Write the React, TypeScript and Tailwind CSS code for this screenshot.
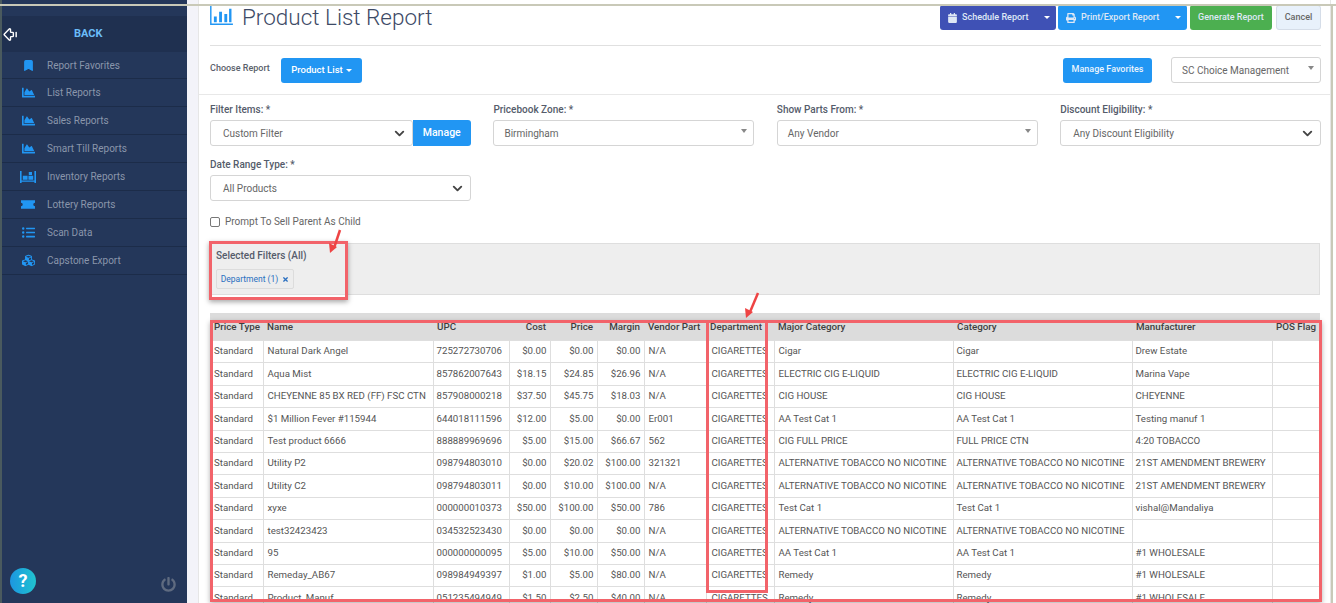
import { ArrowBigLeftDash, Bookmark, ChevronDown } from 'lucide-react';
import { FaCalendar, FaChartArea, FaCubes, FaListUl, FaPowerOff, FaPrint, FaTimes } from 'react-icons/fa';

const InventoryIcon = ({ className }: { className?: string }) => (
  <svg viewBox="0 0 20 16" className={className} fill="currentColor">
    <path d="M0 1h2v15H0zM18 1h2v15h-2zM2 13h16v1.500H2z" />
    <path d="M3.500 7h6v5h-6zM10.500 7h6v5h-6zM11 2.500h4v3.500h-4z" />
  </svg>
);

const TicketIcon = ({ className }: { className?: string }) => (
  <svg viewBox="0 0 20 12" className={className} fill="currentColor">
    <path d="M0 0h20v3.500a2.500 2.500 0 0 0 0 5V12H0V8.500a2.500 2.500 0 0 0 0-5z" />
  </svg>
);

const BarsIcon = ({ className }: { className?: string }) => (
  <svg viewBox="0 0 24 20" className={className} fill="currentColor">
    <path d="M0 0h1.500v18.500H24V20H0z" />
    <path d="M4 11h3v6H4zM9.500 6h3v11h-3zM15 8.500h3V17h-3zM20 3h2.500v14H20z" />
  </svg>
);

const menu = [
  { label: 'Report Favorites', icon: <Bookmark className="w-[13px] h-[15px]" fill="currentColor" /> },
  { label: 'List Reports', icon: <FaChartArea className="w-[13px] h-[13px]" /> },
  { label: 'Sales Reports', icon: <FaChartArea className="w-[13px] h-[13px]" /> },
  { label: 'Smart Till Reports', icon: <FaChartArea className="w-[13px] h-[13px]" /> },
  { label: 'Inventory Reports', icon: <InventoryIcon className="w-[16px] h-[13px]" /> },
  { label: 'Lottery Reports', icon: <TicketIcon className="w-[14px] h-[9px]" /> },
  { label: 'Scan Data', icon: <FaListUl className="w-[13px] h-[13px]" /> },
  { label: 'Capstone Export', icon: <FaCubes className="w-[13px] h-[13px]" /> },
];

const columns = [
  { name: 'Price Type', width: 'w-[53px]' },
  { name: 'Name', width: 'w-[170px]' },
  { name: 'UPC', width: 'w-[76px]' },
  { name: 'Cost', width: 'w-[41px]', right: true },
  { name: 'Price', width: 'w-[47px]', right: true },
  { name: 'Margin', width: 'w-[47px]', right: true },
  { name: 'Vendor Part', width: 'w-[62px]' },
  { name: 'Department', width: 'w-[68px]' },
  { name: 'Major Category', width: 'w-[179px]' },
  { name: 'Category', width: 'w-[179px]' },
  { name: 'Manufacturer', width: 'w-[140px]' },
  { name: 'POS Flag', width: 'w-[48px]' },
];

const rows = [
  ['Natural Dark Angel', '725272730706', '$0.00', '$0.00', '$0.00', 'N/A', 'Cigar', 'Cigar', 'Drew Estate'],
  ['Aqua Mist', '857862007643', '$18.15', '$24.85', '$26.96', 'N/A', 'ELECTRIC CIG E-LIQUID', 'ELECTRIC CIG E-LIQUID', 'Marina Vape'],
  ['CHEYENNE 85 BX RED (FF) FSC CTN', '857908000218', '$37.50', '$45.75', '$18.03', 'N/A', 'CIG HOUSE', 'CIG HOUSE', 'CHEYENNE'],
  ['$1 Million Fever #115944', '644018111596', '$12.00', '$5.00', '$0.00', 'Er001', 'AA Test Cat 1', 'AA Test Cat 1', 'Testing manuf 1'],
  ['Test product 6666', '888889969696', '$5.00', '$15.00', '$66.67', '562', 'CIG FULL PRICE', 'FULL PRICE CTN', '4:20 TOBACCO'],
  ['Utility P2', '098794803010', '$0.00', '$20.02', '$100.00', '321321', 'ALTERNATIVE TOBACCO NO NICOTINE', 'ALTERNATIVE TOBACCO NO NICOTINE', '21ST AMENDMENT BREWERY'],
  ['Utility C2', '098794803011', '$0.00', '$10.00', '$100.00', 'N/A', 'ALTERNATIVE TOBACCO NO NICOTINE', 'ALTERNATIVE TOBACCO NO NICOTINE', '21ST AMENDMENT BREWERY'],
  ['xyxe', '000000010373', '$50.00', '$100.00', '$50.00', '786', 'Test Cat 1', 'Test Cat 1', 'vishal@Mandaliya'],
  ['test32423423', '034532523430', '$0.00', '$0.00', '$0.00', 'N/A', 'ALTERNATIVE TOBACCO NO NICOTINE', 'ALTERNATIVE TOBACCO NO NICOTINE', ''],
  ['95', '000000000095', '$5.00', '$10.00', '$50.00', 'N/A', 'AA Test Cat 1', 'AA Test Cat 1', '#1 WHOLESALE'],
  ['Remeday_AB67', '098984949397', '$1.00', '$5.00', '$80.00', 'N/A', 'Remedy', 'Remedy', '#1 WHOLESALE'],
  ['Product_Manuf', '051235494949', '$1.50', '$2.50', '$40.00', 'N/A', 'Remedy', 'Remedy', '#1 WHOLESALE'],
];

const Label = ({ text }: { text: string }) => (
  <label className="block h-[17px] text-[10px] leading-[17px] font-medium text-[#555c6b]">{text}</label>
);

const SelectBox = ({ text, chevron }: { text: string; chevron?: boolean }) => (
  <div className={`flex h-[26px] items-center justify-between rounded-[3px] border border-[#d5d5d5] bg-white pr-[5px] text-[10px] text-[#666] ${chevron ? 'pl-[12px]' : 'pl-[10px]'}`}>
    <span>{text}</span>
    {chevron ? (
      <ChevronDown className="w-[15px] h-[15px] text-[#444]" strokeWidth={3} />
    ) : (
      <span className="mr-[1px] mb-[4px] h-0 w-0 border-x-[3px] border-t-[4px] border-x-transparent border-t-[#888]" />
    )}
  </div>
);

export default function App() {
  return (
    <div className="relative flex h-[603px] w-[1336px] overflow-hidden bg-white font-['Roboto',sans-serif]">
      {/* Sidebar */}
      <aside className="flex w-[187px] shrink-0 flex-col border-l-2 border-l-[#4a5a5e] bg-[#24375a]">
        <div className="mt-[16px] flex h-[36px] items-center bg-[#1f3050]">
          <ArrowBigLeftDash className="w-[17px] h-[17px] text-white" />
          <span className="ml-[55px] text-[11px] font-bold text-[#6bbcf8]">BACK</span>
        </div>
        {menu.map((item, i) => (
          <div key={item.label} className={`flex items-center border-b border-[#1c2c49] text-[10px] text-[#8a96ab] ${i === 0 ? 'h-[27px]' : 'h-[28px]'}`}>
            <span className="flex w-[45px] justify-center pl-[7px] text-[#2196f3]">{item.icon}</span>
            <span>{item.label}</span>
          </div>
        ))}
        <div className="mt-auto mb-[9px] flex items-center justify-between pl-[8px] pr-[11px]">
          <div className="flex h-[26px] w-[26px] items-center justify-center rounded-full bg-gradient-to-r from-[#1e96e0] to-[#22c3cf] text-[18px] font-bold leading-none text-white">?</div>
          <FaPowerOff className="mt-[7px] w-[15px] h-[15px] text-[#5f6b80]" />
        </div>
      </aside>

      <div className="w-[11px] shrink-0 bg-[#f3f3f9]" />

      {/* Main */}
      <main className="w-[1133px] shrink-0 border-x border-[#e6e6e6] bg-white">
        <div className="ml-[11px] mr-[9px] flex h-[46px] items-start justify-between border-b border-[#e0e0e0] pt-[5px]">
          <div className="flex items-center gap-[9px]">
            <BarsIcon className="mt-[-3px] w-[23px] h-[19px] text-[#2196f3]" />
            <h1 className="text-[22.5px] font-light leading-[24px] text-[#3d4a66]">Product List Report</h1>
          </div>
          <div className="flex items-center gap-[2px] text-[9px] font-medium text-[#dfe8f5]">
            <div className="flex h-[25px] w-[116px] items-center rounded-[3px] bg-[#3f51b5] pl-[8px]">
              <FaCalendar className="w-[9px] h-[10px]" />
              <span className="ml-[5px]">Schedule Report</span>
              <span className="ml-auto mr-[6px] h-0 w-0 border-x-[3px] border-t-[3px] border-x-transparent border-t-white" />
            </div>
            <div className="flex h-[25px] w-[129px] items-center rounded-[3px] bg-[#2196f3] pl-[8px]">
              <FaPrint className="w-[10px] h-[10px]" />
              <span className="ml-[5px]">Print/Export Report</span>
              <span className="ml-auto mr-[6px] h-0 w-0 border-x-[3px] border-t-[3px] border-x-transparent border-t-white" />
            </div>
            <div className="ml-[1px] flex h-[25px] w-[82px] items-center justify-center rounded-[3px] bg-[#4caf50]">Generate Report</div>
            <div className="ml-[2px] flex h-[25px] w-[45px] items-center justify-center rounded-[3px] border border-[#d5dde8] bg-[#e8f1fb] text-[#666]">Cancel</div>
          </div>
        </div>

        <div className="flex h-[49px] items-center border-b border-[#e8e8e8] pl-[11px] pr-[9px]">
          <span className="mb-[3px] w-[60px] text-[9px] font-medium text-[#5a5f6b]">Choose Report</span>
          <div className="ml-[11px] flex h-[25px] w-[81px] items-center justify-center gap-[3px] rounded-[3px] bg-[#2196f3] text-[9.5px] font-medium text-white">
            Product List
            <span className="h-0 w-0 border-x-[3px] border-t-[3px] border-x-transparent border-t-white" />
          </div>
          <div className="ml-auto flex h-[25px] w-[89px] items-center justify-center rounded-[3px] bg-[#2196f3] text-[9px] font-medium text-[#eaf4fd]">Manage Favorites</div>
          <div className="ml-[19px] w-[150px]">
            <SelectBox text="SC Choice Management" />
          </div>
        </div>

        <div className="pl-[11px] pr-[9px] pt-[6px]">
          <div className="grid grid-cols-4 gap-x-[22.67px]">
            <div>
              <Label text="Filter Items: *" />
              <div className="mt-[2px] flex">
                <div className="flex-1">
                  <SelectBox text="Custom Filter" chevron />
                </div>
                <div className="flex h-[26px] w-[58px] items-center justify-center rounded-r-[3px] bg-[#2196f3] text-[10.5px] font-medium text-white">Manage</div>
              </div>
            </div>
            <div>
              <Label text="Pricebook Zone: *" />
              <div className="mt-[2px]"><SelectBox text="Birmingham" /></div>
            </div>
            <div>
              <Label text="Show Parts From: *" />
              <div className="mt-[2px]"><SelectBox text="Any Vendor" /></div>
            </div>
            <div>
              <Label text="Discount Eligibility: *" />
              <div className="mt-[2px]"><SelectBox text="Any Discount Eligibility" chevron /></div>
            </div>
          </div>

          <div className="mt-[10px] w-[261px]">
            <Label text="Date Range Type: *" />
            <div className="mt-[2px]"><SelectBox text="All Products" chevron /></div>
          </div>

          <div className="mt-[13px] flex items-center gap-[5px] text-[10px] text-[#666]">
            <span className="h-[10px] w-[10px] rounded-[2px] border border-[#777] bg-white" />
            Prompt To Sell Parent As Child
          </div>

          <div className="mt-[14px] h-[52px] w-[1110px] border border-[#dedede] bg-[#eeeeee] pl-[5px] pt-[6px]">
            <div className="text-[10px] font-medium leading-[12px] text-[#555c6b]">Selected Filters (All)</div>
            <div className="mt-[7px] flex h-[20px] w-[78px] items-center justify-center gap-[4px] rounded-[2px] border border-[#dcdcdc] bg-[#ededed] text-[8.5px] text-[#2a6fc0]">
              Department (1)
              <FaTimes className="w-[7px] h-[7px]" />
            </div>
          </div>

          <table className="mt-[18px] w-[1110px] table-fixed border-collapse text-[9.7px] text-[#555]">
            <colgroup>
              {columns.map((c) => (
                <col key={c.name} className={c.width} />
              ))}
            </colgroup>
            <thead>
              <tr className="h-[27px] bg-[#dcdcdc] text-[9.8px] text-[#3f3f3f]">
                {columns.map((c) => (
                  <th key={c.name} className={`whitespace-nowrap px-[4px] pt-[1px] align-top font-medium leading-[26px] ${c.right ? 'text-right' : 'text-left'}`}>
                    {c.name}
                  </th>
                ))}
              </tr>
            </thead>
            <tbody>
              {rows.map((r) => (
                <tr key={r[1]} className="h-[22.4px]">
                  <td className="border border-[#dedede] border-l-0 px-[4px]">Standard</td>
                  <td className="whitespace-nowrap border border-[#dedede] px-[4px]">{r[0]}</td>
                  <td className="whitespace-nowrap border border-[#dedede] px-[3px]">{r[1]}</td>
                  <td className="border border-[#dedede] px-[3px] text-right">{r[2]}</td>
                  <td className="border border-[#dedede] px-[3px] text-right">{r[3]}</td>
                  <td className="border border-[#dedede] px-[3px] text-right">{r[4]}</td>
                  <td className="border border-[#dedede] px-[4px]">{r[5]}</td>
                  <td className="whitespace-nowrap border border-[#dedede] px-[5px]">CIGARETTES</td>
                  <td className="whitespace-nowrap border border-[#dedede] px-[4px]">{r[6]}</td>
                  <td className="whitespace-nowrap border border-[#dedede] px-[3px]">{r[7]}</td>
                  <td className="whitespace-nowrap border border-[#dedede] px-[3px]">{r[8]}</td>
                  <td className="border border-[#dedede] border-r-0"></td>
                </tr>
              ))}
            </tbody>
          </table>
        </div>
      </main>

      {/* Annotations drawn over the screenshot */}
      <div className="absolute left-[0px] top-[4px] h-[2px] w-[1336px] bg-[#c9c9b8]" />
      <div className="absolute left-[1331px] top-[4px] h-[599px] w-[2px] bg-[#c9c9b8]" />
      <div className="absolute left-[209px] top-[241px] h-[59px] w-[139px] border-[3px] border-[#f2636a] shadow-[0_2px_5px_rgba(0,0,0,0.35)]" />
      <div className="absolute left-[210px] top-[320px] h-[282px] w-[1112px] border-[3px] border-[#f2636a] shadow-[0_2px_5px_rgba(0,0,0,0.3)]" />
      <div className="absolute left-[706px] top-[320px] h-[273px] w-[62px] border-[3px] border-[#f2636a]" />
      <svg className="absolute left-[325px] top-[226px] w-[20px] h-[30px]" viewBox="0 0 20 30">
        <path d="M15 4 L9 22" stroke="#ee4444" strokeWidth="2.500" />
        <path d="M4 17 L12 21 L5 27 Z" fill="#ee4444" />
      </svg>
      <svg className="absolute left-[741px] top-[291px] w-[20px] h-[30px]" viewBox="0 0 20 30">
        <path d="M17 2 L9 21" stroke="#ee4444" strokeWidth="2.500" />
        <path d="M4 17 L12 21 L5 27 Z" fill="#ee4444" />
      </svg>
    </div>
  );
}
